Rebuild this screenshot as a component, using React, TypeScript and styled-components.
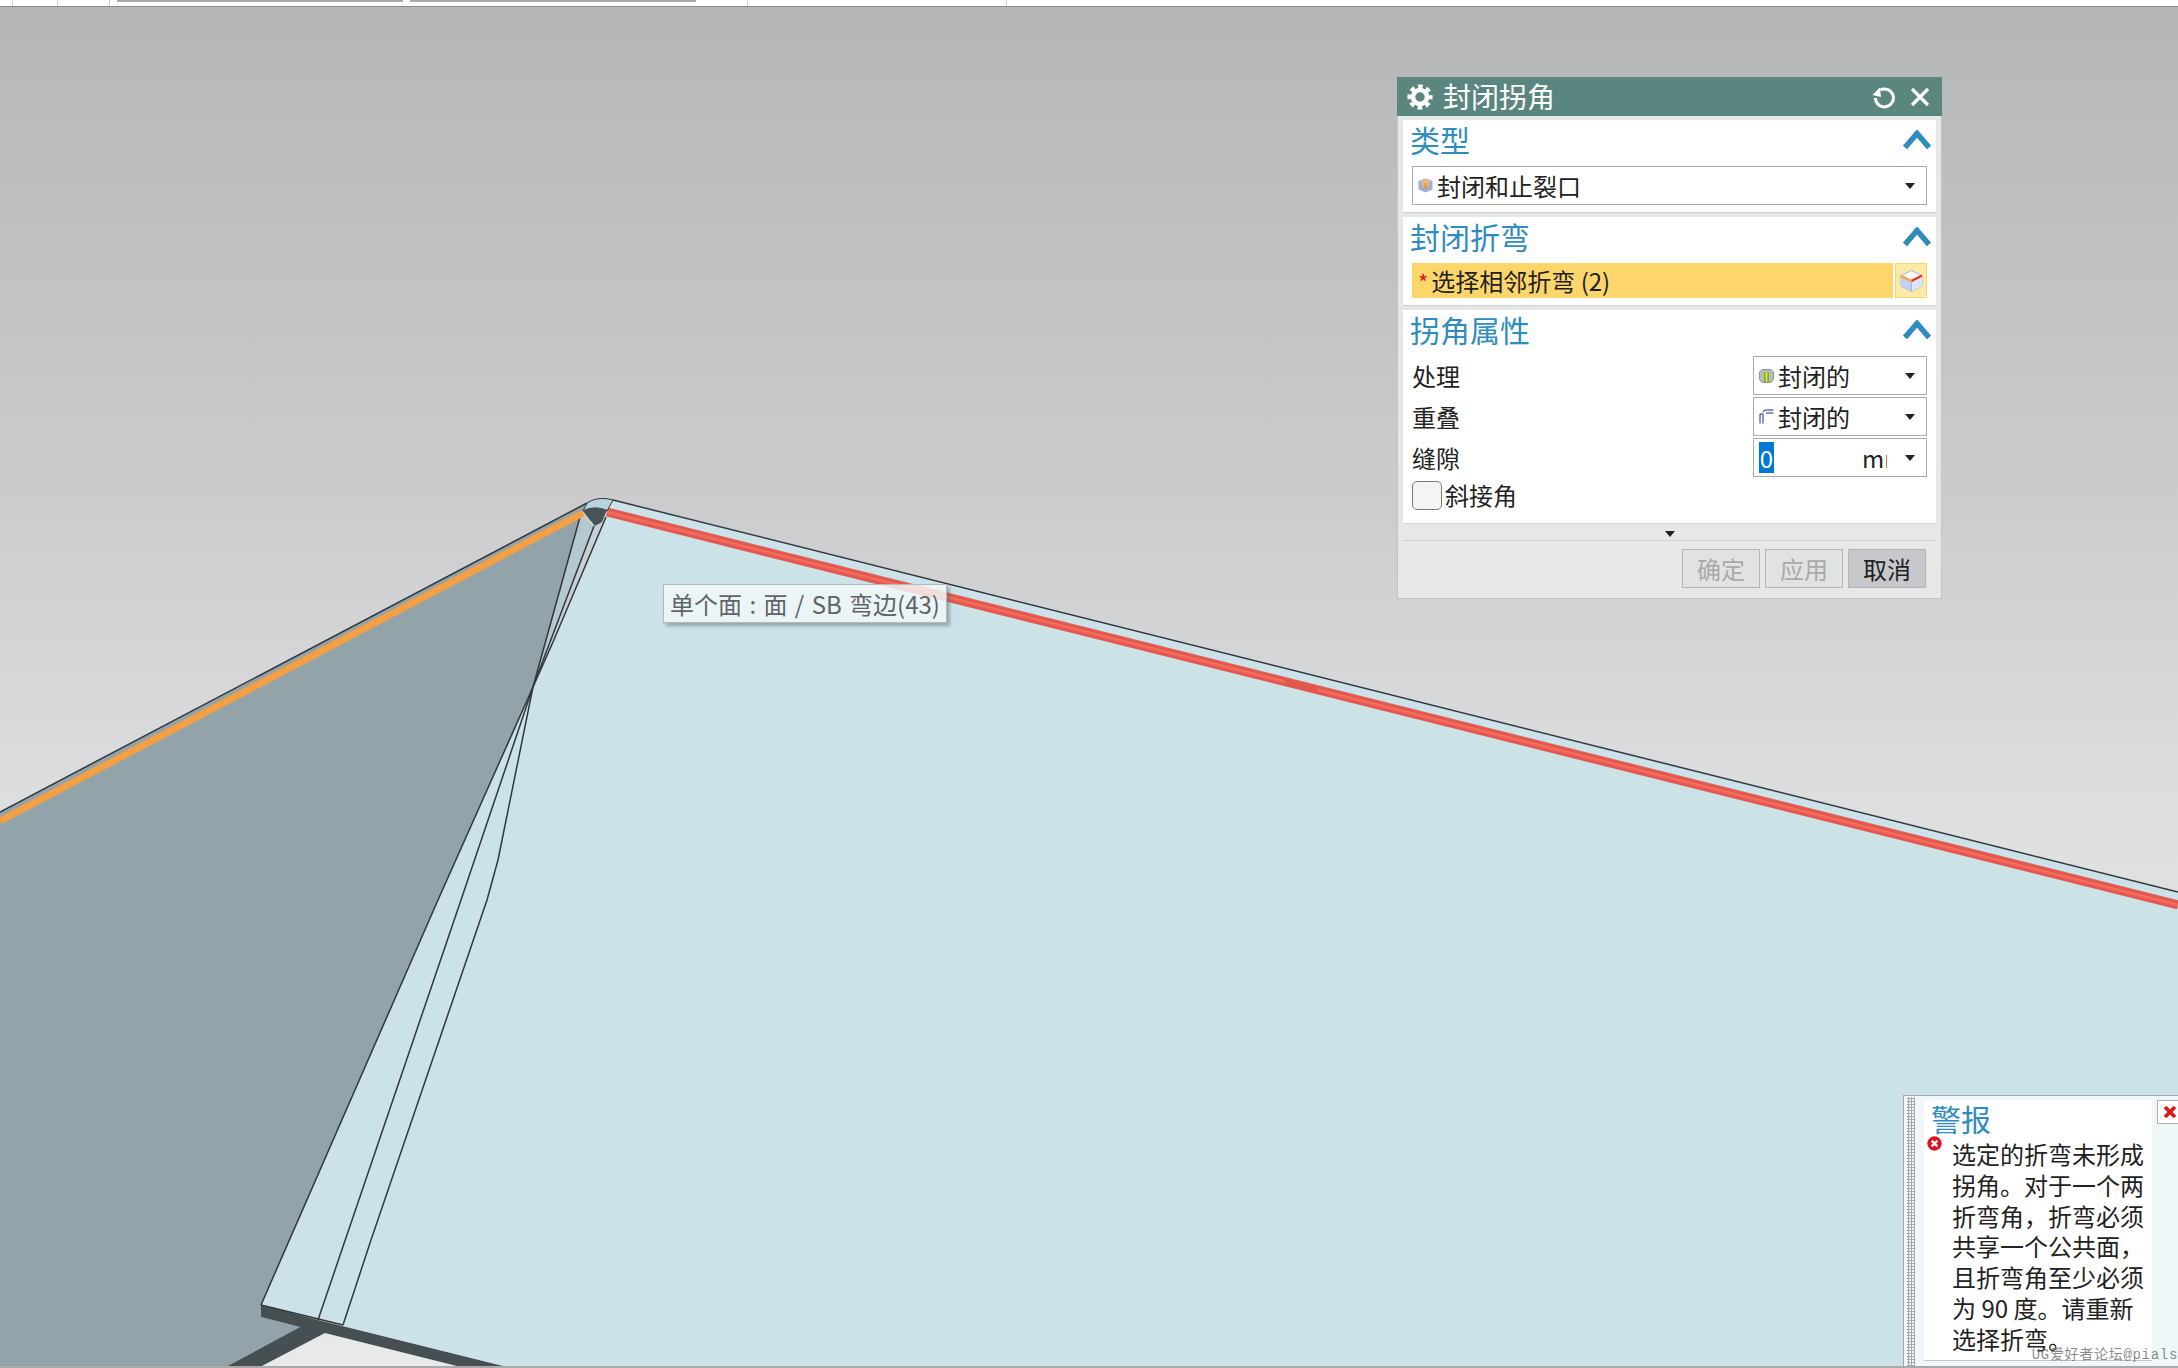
import React from "react";
import styled, { createGlobalStyle } from "styled-components";

const CJK = '"Noto Sans CJK SC", "Noto Sans", sans-serif';

const Global = createGlobalStyle`
  html, body { margin: 0; padding: 0; width: 2178px; height: 1368px; overflow: hidden; background: #fff; }
  * { box-sizing: border-box; }
  #root { width: 2178px; height: 1368px; }
`;

const Page = styled.div`
  width: 2178px;
  height: 1368px;
  display: flex;
  flex-direction: column;
  font-family: ${CJK};
  color: #222;
`;

const TopBar = styled.div`
  height: 7px;
  flex: none;
  display: flex;
  background: #fff;
  border-bottom: 1px solid #87908f;
`;

const TopSlot = styled.div<{ $w: number; $bar?: boolean; $tick?: boolean }>`
  width: ${(p) => p.$w}px;
  flex: none;
  height: ${(p) => (p.$bar ? 2 : 6)}px;
  background: ${(p) => (p.$bar ? "#aaaaaa" : "transparent")};
  border-right: ${(p) => (p.$tick ? "1px solid #cfcfcf" : "none")};
`;

const Viewport = styled.div`
  position: relative;
  flex: 1;
  overflow: hidden;
  background: linear-gradient(180deg, #b5b6b8 0%, #cbcbcd 35%, #dedfe1 60%, #e8e9eb 100%);
  border-bottom: 2px solid #a9a9a9;
`;

const Scene = styled.svg`
  position: absolute;
  left: 0;
  top: 0;
  width: 2178px;
  height: 1361px;
`;

const Tip = styled.div`
  position: absolute;
  left: 663px;
  top: 577px;
  width: 284px;
  height: 39px;
  display: flex;
  align-items: center;
  justify-content: center;
  white-space: nowrap;
  font-size: 24px;
  word-spacing: 2px;
  color: #5f6466;
  background: rgba(241, 249, 251, 0.82);
  border: 1px solid #b3b9bb;
  box-shadow: 3px 3px 3px rgba(90, 100, 105, 0.45);
`;

const Dialog = styled.div`
  position: absolute;
  left: 1397px;
  top: 70px;
  width: 545px;
  height: 522px;
  display: flex;
  flex-direction: column;
  background: #e6e7e7;
  border: 1px solid #c2c4c4;
  border-top: none;
`;

const TitleBar = styled.div`
  height: 39px;
  flex: none;
  margin: 0 -1px;
  display: flex;
  align-items: center;
  padding: 0 12px 0 10px;
  background: #5b8680;
  color: #fff;
`;

const TitleText = styled.div`
  margin-left: 10px;
  flex: 1;
  font-size: 28px;
  line-height: 39px;
`;

const TitleTools = styled.div`
  display: flex;
  align-items: center;
  gap: 14px;
`;

const Panels = styled.div`
  display: flex;
  flex-direction: column;
  gap: 4px;
  padding: 4px 5px 0 5px;
`;

const Panel = styled.section<{ $h: number }>`
  height: ${(p) => p.$h}px;
  background: #fff;
  border-bottom: 1px solid #cfd0d0;
  padding: 0 9px;
`;

const PanelHead = styled.div`
  height: 46px;
  display: flex;
  align-items: flex-start;
  justify-content: space-between;
`;

const PanelTitle = styled.div`
  font-size: 30px;
  line-height: 38px;
  color: #2f8cbf;
  margin-left: -2px;
`;

const Chevron = styled.svg`
  width: 28px;
  height: 19px;
  margin: 10px -4px 0 0;
`;

const Select = styled.div<{ $w?: number }>`
  width: ${(p) => (p.$w ? `${p.$w}px` : "100%")};
  height: 39px;
  flex: none;
  display: flex;
  align-items: center;
  padding: 0 11px 0 5px;
  background: #fff;
  border: 1px solid #a9a9a9;
  font-size: 24px;
`;

const SelectText = styled.span`
  flex: 1;
  margin-left: 4px;
  white-space: nowrap;
  line-height: 37px;
`;

const Caret = styled.i`
  display: block;
  flex: none;
  width: 0;
  height: 0;
  border-left: 5.5px solid transparent;
  border-right: 5.5px solid transparent;
  border-top: 6px solid #222;
`;

const SelectionRow = styled.div`
  height: 35px;
  display: flex;
  gap: 2px;
`;

const SelectionField = styled.div`
  flex: 1;
  display: flex;
  align-items: center;
  padding-left: 6px;
  background: #fcd56b;
  font-size: 24px;
  white-space: nowrap;
`;

const Asterisk = styled.span`
  color: #e11414;
  font-size: 22px;
  margin-right: 3px;
`;

const SelectionButton = styled.div`
  width: 32px;
  display: flex;
  align-items: center;
  justify-content: center;
  background: #faeaa8;
  border: 1px solid #fcd56b;
`;

const PropRow = styled.div`
  height: 39px;
  margin-bottom: 2px;
  display: flex;
  align-items: center;
  justify-content: space-between;
  font-size: 24px;
`;

const ValueText = styled.span`
  flex: 1;
  display: flex;
`;

const SelectedValue = styled.span`
  width: 15px;
  height: 31px;
  line-height: 31px;
  text-align: center;
  background: #0078d7;
  color: #fff;
`;

const UnitText = styled.span`
  width: 25px;
  overflow: hidden;
  white-space: nowrap;
  margin-right: 18px;
  line-height: 37px;
`;

const CheckRow = styled.div`
  display: flex;
  align-items: center;
  gap: 3px;
  margin-top: 3px;
  font-size: 24px;
  line-height: 30px;
`;

const CheckBox = styled.div`
  width: 30px;
  height: 29px;
  border: 1px solid #7b7b7b;
  border-radius: 5px;
  background: #f4f4f4;
`;

const Expander = styled.div`
  height: 17px;
  margin: 0 5px;
  display: flex;
  align-items: center;
  justify-content: center;
  padding-top: 3px;
  border-bottom: 1px solid #cfd0d0;
`;

const Footer = styled.div`
  display: flex;
  justify-content: flex-end;
  gap: 5px;
  padding: 8px 15px 0 0;
`;

const ActionButton = styled.div<{ $off?: boolean }>`
  width: 78px;
  height: 39px;
  display: flex;
  align-items: center;
  justify-content: center;
  font-size: 24px;
  color: ${(p) => (p.$off ? "#a9a9a9" : "#222")};
  background: ${(p) => (p.$off ? "#e1e2e2" : "#c6c8cb")};
  border: 1px solid #b4b6b6;
`;

const Alert = styled.div`
  position: absolute;
  left: 1903px;
  top: 1088px;
  width: 275px;
  height: 271px;
  display: flex;
  padding: 4px 0 5px 2px;
  background: #eff7fa;
  border: 1px solid #a8a8a8;
  border-right: none;
  border-bottom: none;
`;

const Gripper = styled.div`
  width: 8px;
  margin: -3px 9px -5px 1px;
  flex: none;
  background-image: radial-gradient(circle, #a7a7a7 1.1px, transparent 1.3px);
  background-size: 3px 3px;
`;

const AlertPanel = styled.div`
  width: 228px;
  flex: none;
  background: #fff;
  border-bottom: 1px solid #c4c4c4;
  padding-left: 7px;
`;

const AlertTitle = styled.div`
  font-size: 30px;
  line-height: 36px;
  color: #2f8cbf;
`;

const AlertBody = styled.div`
  display: flex;
  margin-left: -4px;
`;

const AlertIcon = styled.svg`
  width: 15px;
  height: 15px;
  flex: none;
  margin-right: 10px;
`;

const AlertLines = styled.div`
  margin-top: 3px;
`;

const AlertLine = styled.div`
  font-size: 24px;
  line-height: 30.8px;
  white-space: nowrap;
  color: #222;
`;

const AlertClose = styled.div`
  position: absolute;
  left: 253px;
  top: 4px;
  width: 30px;
  height: 24px;
  padding-left: 5px;
  display: flex;
  align-items: center;
  background: #fff;
  border: 1px solid #b0b0b0;
`;

const Watermark = styled.div`
  position: absolute;
  right: 0;
  bottom: 3px;
  font-family: "Liberation Mono", "Noto Sans CJK SC", monospace;
  font-size: 14px;
  line-height: 16px;
  letter-spacing: 0.7px;
  white-space: nowrap;
  color: rgba(95, 100, 100, 0.75);
`;

const ChevronIcon = () => (
  <Chevron viewBox="0 0 28 19">
    <path d="M2 17.5 L14 3.5 L26 17.5" fill="none" stroke="#2f8cbf" strokeWidth="5.5" />
  </Chevron>
);

const GearIcon = () => (
  <svg width="26" height="26" viewBox="0 0 26 26">
    <circle cx="13" cy="13" r="7" fill="none" stroke="#fff" strokeWidth="4.6" />
    <circle cx="13" cy="13" r="10.6" fill="none" stroke="#fff" strokeWidth="4" strokeDasharray="4.6 3.73" strokeDashoffset="2.3" />
  </svg>
);

const RefreshIcon = () => (
  <svg width="24" height="24" viewBox="0 0 24 24">
    <path d="M8.2 5 A9 9 0 1 1 3.4 13" fill="none" stroke="#fff" strokeWidth="3" />
    <path d="M0.5 10 L7.8 2.5 L9 12 Z" fill="#fff" />
  </svg>
);

const CloseIcon = () => (
  <svg width="20" height="20" viewBox="0 0 20 20">
    <path d="M2 2 L18 18 M18 2 L2 18" stroke="#fff" strokeWidth="3.2" />
  </svg>
);

const TypeIcon = () => (
  <svg width="15" height="15" viewBox="0 0 15 15">
    <path d="M7.5 0.5 L14.5 3 V11.5 L7.5 14.5 L0.5 11.5 V3 Z" fill="#9fb0d6" />
    <path d="M0.5 3 L7.5 0.5 L14.5 3 L7.5 6 Z" fill="#c9b6d8" />
    <circle cx="7.5" cy="5.5" r="3.4" fill="#f7b95e" />
    <path d="M7.5 5 V11" stroke="#e88a2e" strokeWidth="2" />
  </svg>
);

const PickIcon = () => (
  <svg width="23" height="22" viewBox="0 0 23 22">
    <path d="M11.5 0.5 L22 5.5 V16 L11.5 21.5 L1 16 V5.5 Z" fill="#fbfbff" stroke="#a9b4d2" />
    <path d="M1 6 L11.5 11 V21.5 L1 16 Z" fill="#c2d0f4" />
    <path d="M22 6 L11.5 11 V21.5 L22 16 Z" fill="#dde5fb" />
    <path d="M11.5 11 L22 5.5" fill="none" stroke="#ee2a1e" strokeWidth="2.2" />
    <path d="M1 6 L11.5 11" fill="none" stroke="#f6a52a" strokeWidth="2.2" />
    <path d="M11.5 11 V21.5" fill="none" stroke="#a9b4d2" strokeWidth="1" />
  </svg>
);

const TreatIcon = () => (
  <svg width="15" height="14" viewBox="0 0 15 14">
    <path d="M3 0.5 H12 L14.5 3 V10.5 L12 13.5 H3 L0.5 10.5 V3 Z" fill="#b9bdb9" stroke="#7d827d" strokeWidth="0.8" />
    <rect x="5" y="3" width="5" height="10" fill="#78b72b" />
    <path d="M7.5 3 V13" stroke="#f1e62a" strokeWidth="1.6" />
  </svg>
);

const OverlapIcon = () => (
  <svg width="15" height="15" viewBox="0 0 15 15">
    <path d="M1 14.5 V5 H4 V14.5" fill="none" stroke="#1c2b8c" strokeWidth="1" />
    <path d="M4 3.5 Q4 1 7 1 H14.5 M7 4 H14.5" fill="none" stroke="#1c2b8c" strokeWidth="1" />
  </svg>
);

const ErrorIcon = () => (
  <AlertIcon viewBox="0 0 15 15">
    <circle cx="7.5" cy="7.5" r="7.2" fill="#e30f1f" />
    <path d="M4.6 4.6 L10.4 10.4 M10.4 4.6 L4.6 10.4" stroke="#fff" strokeWidth="2.2" />
  </AlertIcon>
);

const RedX = () => (
  <svg width="14" height="14" viewBox="0 0 14 14">
    <path d="M2 2 L12 12 M12 2 L2 12" stroke="#e5141c" strokeWidth="3.6" />
  </svg>
);

const Model = () => (
  <Scene viewBox="0 7 2178 1361">
    {/* light face */}
    <polygon points="600,500 613,500 2178,892 2178,1368 511,1368 261,1305" fill="#cbe2e8" />
    {/* dark side face */}
    <polygon points="587,503 0,812 0,1368 224,1368 300,1327 261,1317 261,1305 438,900 533,687 580,517" fill="#92a3a9" />
    {/* bend strip and sliver near the corner */}
    <polygon points="581,516 594,526 537,678 533,687" fill="#b3c8cf" />
    <polygon points="594,526 606,517 580,580 553,642 534,685" fill="#c9d1d4" />
    {/* lower thickness */}
    <polygon points="261,1305 261,1317 300,1327 224,1368 258,1368 325,1333 465,1368 511,1368 318,1320" fill="#464f51" />
    {/* black edges */}
    <g fill="none" stroke="#30383b" strokeWidth="1.5">
      <path d="M613 500 L2178 892" />
      <path d="M587 503 L0 812" />
      <path d="M261 1305 L438 900 L533 687 L580 517" />
      <path d="M533 687 L461 900 L318 1320" />
      <path d="M533 687 L498 860 L487 900 L371 1240 L343 1325" />
      <path d="M533 687 L553 642 L606 517" />
      <path d="M594 526 L533 687" />
      <path d="M261 1305 L343 1325" />
    </g>
    {/* highlighted edges */}
    <path d="M583 513 L0 821" stroke="#f59f45" strokeWidth="7" fill="none" />
    <path d="M607 512 L2178 905" stroke="#e2584c" strokeWidth="9" fill="none" />
    <path d="M607 512 L2178 905" stroke="#f06a5e" strokeWidth="3" fill="none" />
    <path d="M1285 681 L1318 689" stroke="#e2584c" strokeWidth="5" fill="none" />
    {/* rounded corner */}
    <path d="M583 511 L587 503 C596 497 606 498 613 500 L607 511 C600 507 590 507 583 511 Z" fill="#b7d3db" stroke="#30383b" strokeWidth="1" />
    <path d="M583 511 C590 507 600 507 607 510 L602 522 L595 526 L590 520 Z" fill="#46545a" />
  </Scene>
);

const alertLines = [
  "选定的折弯未形成",
  "拐角。对于一个两",
  "折弯角，折弯必须",
  "共享一个公共面，",
  "且折弯角至少必须",
  "为 90 度。请重新",
  "选择折弯。",
];

export default function App() {
  return (
    <Page>
      <Global />
      <TopBar>
        <TopSlot $w={13} $tick />
        <TopSlot $w={45} $tick />
        <TopSlot $w={52} $tick />
        <TopSlot $w={7} />
        <TopSlot $w={286} $bar />
        <TopSlot $w={7} />
        <TopSlot $w={286} $bar />
        <TopSlot $w={52} $tick />
        <TopSlot $w={259} $tick />
      </TopBar>
      <Viewport>
        <Model />
        <Tip>单个面 : 面 / SB 弯边(43)</Tip>
        <Dialog>
          <TitleBar>
            <GearIcon />
            <TitleText>封闭拐角</TitleText>
            <TitleTools>
              <RefreshIcon />
              <CloseIcon />
            </TitleTools>
          </TitleBar>
          <Panels>
            <Panel $h={93}>
              <PanelHead>
                <PanelTitle>类型</PanelTitle>
                <ChevronIcon />
              </PanelHead>
              <Select>
                <TypeIcon />
                <SelectText>封闭和止裂口</SelectText>
                <Caret />
              </Select>
            </Panel>
            <Panel $h={89}>
              <PanelHead>
                <PanelTitle>封闭折弯</PanelTitle>
                <ChevronIcon />
              </PanelHead>
              <SelectionRow>
                <SelectionField>
                  <Asterisk>*</Asterisk>
                  选择相邻折弯 (2)
                </SelectionField>
                <SelectionButton>
                  <PickIcon />
                </SelectionButton>
              </SelectionRow>
            </Panel>
            <Panel $h={214}>
              <PanelHead>
                <PanelTitle>拐角属性</PanelTitle>
                <ChevronIcon />
              </PanelHead>
              <PropRow>
                处理
                <Select $w={174}>
                  <TreatIcon />
                  <SelectText>封闭的</SelectText>
                  <Caret />
                </Select>
              </PropRow>
              <PropRow>
                重叠
                <Select $w={174}>
                  <OverlapIcon />
                  <SelectText>封闭的</SelectText>
                  <Caret />
                </Select>
              </PropRow>
              <PropRow>
                缝隙
                <Select $w={174}>
                  <ValueText>
                    <SelectedValue>0</SelectedValue>
                  </ValueText>
                  <UnitText>mm</UnitText>
                  <Caret />
                </Select>
              </PropRow>
              <CheckRow>
                <CheckBox />
                斜接角
              </CheckRow>
            </Panel>
          </Panels>
          <Expander>
            <Caret />
          </Expander>
          <Footer>
            <ActionButton $off>确定</ActionButton>
            <ActionButton $off>应用</ActionButton>
            <ActionButton>取消</ActionButton>
          </Footer>
        </Dialog>
        <Alert>
          <Gripper />
          <AlertPanel>
            <AlertTitle>警报</AlertTitle>
            <AlertBody>
              <ErrorIcon />
              <AlertLines>
                {alertLines.map((l) => (
                  <AlertLine key={l}>{l}</AlertLine>
                ))}
              </AlertLines>
            </AlertBody>
          </AlertPanel>
          <AlertClose>
            <RedX />
          </AlertClose>
          <Watermark>UG爱好者论坛@pials</Watermark>
        </Alert>
      </Viewport>
    </Page>
  );
}
